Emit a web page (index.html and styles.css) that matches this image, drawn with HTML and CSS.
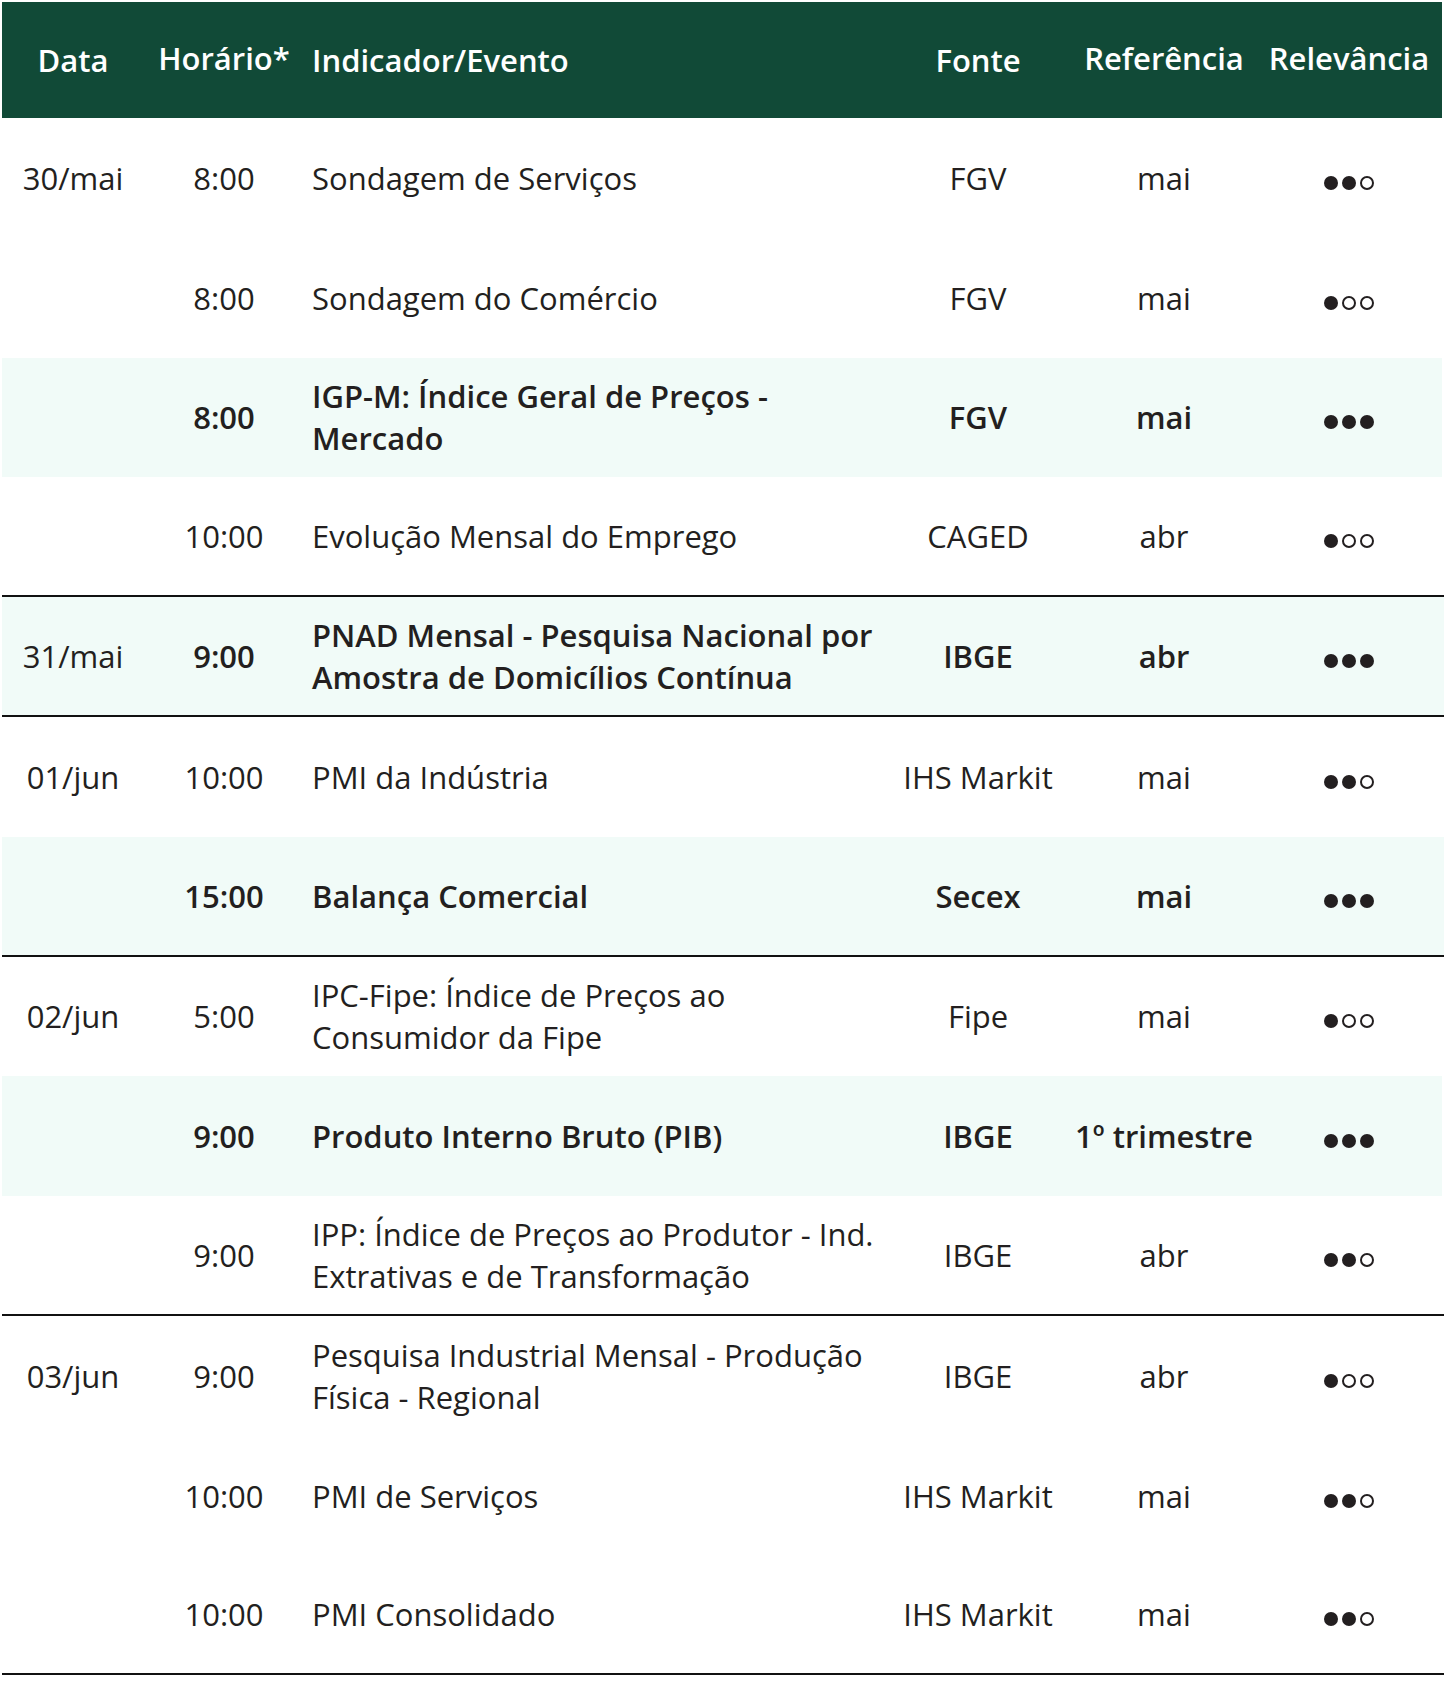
FILE: index.html
```html
<!DOCTYPE html>
<html lang="pt-BR">
<head>
<meta charset="utf-8">
<title>Agenda</title>
<link rel="stylesheet" href="styles.css">
</head>
<body>
<div class="table">
  <div class="row head">
    <div class="c date">Data</div>
    <div class="c time raised">Horário*</div>
    <div class="c ev">Indicador/Evento</div>
    <div class="c src">Fonte</div>
    <div class="c ref raised">Referência</div>
    <div class="c rel raised">Relevância</div>
  </div>

  <div class="row">
    <div class="c date">30/mai</div>
    <div class="c time">8:00</div>
    <div class="c ev">Sondagem de Serviços</div>
    <div class="c src">FGV</div>
    <div class="c ref">mai</div>
    <div class="c rel"><span class="dots"><i class="on"></i><i class="on"></i><i class="off"></i></span></div>
  </div>
  <div class="row">
    <div class="c date"></div>
    <div class="c time">8:00</div>
    <div class="c ev">Sondagem do Comércio</div>
    <div class="c src">FGV</div>
    <div class="c ref">mai</div>
    <div class="c rel"><span class="dots"><i class="on"></i><i class="off"></i><i class="off"></i></span></div>
  </div>
  <div class="row hl">
    <div class="c date"></div>
    <div class="c time b">8:00</div>
    <div class="c ev b">IGP-M: Índice Geral de Preços -<br>Mercado</div>
    <div class="c src b">FGV</div>
    <div class="c ref b">mai</div>
    <div class="c rel"><span class="dots"><i class="on"></i><i class="on"></i><i class="on"></i></span></div>
  </div>
  <div class="row end">
    <div class="c date"></div>
    <div class="c time">10:00</div>
    <div class="c ev">Evolução Mensal do Emprego</div>
    <div class="c src">CAGED</div>
    <div class="c ref">abr</div>
    <div class="c rel"><span class="dots"><i class="on"></i><i class="off"></i><i class="off"></i></span></div>
  </div>

  <div class="row hl end">
    <div class="c date">31/mai</div>
    <div class="c time b">9:00</div>
    <div class="c ev b">PNAD Mensal - Pesquisa Nacional por<br>Amostra de Domicílios Contínua</div>
    <div class="c src b">IBGE</div>
    <div class="c ref b">abr</div>
    <div class="c rel"><span class="dots"><i class="on"></i><i class="on"></i><i class="on"></i></span></div>
  </div>

  <div class="row">
    <div class="c date">01/jun</div>
    <div class="c time">10:00</div>
    <div class="c ev">PMI da Indústria</div>
    <div class="c src">IHS Markit</div>
    <div class="c ref">mai</div>
    <div class="c rel"><span class="dots"><i class="on"></i><i class="on"></i><i class="off"></i></span></div>
  </div>
  <div class="row hl end">
    <div class="c date"></div>
    <div class="c time b">15:00</div>
    <div class="c ev b">Balança Comercial</div>
    <div class="c src b">Secex</div>
    <div class="c ref b">mai</div>
    <div class="c rel"><span class="dots"><i class="on"></i><i class="on"></i><i class="on"></i></span></div>
  </div>

  <div class="row">
    <div class="c date">02/jun</div>
    <div class="c time">5:00</div>
    <div class="c ev">IPC-Fipe: Índice de Preços ao<br>Consumidor da Fipe</div>
    <div class="c src">Fipe</div>
    <div class="c ref">mai</div>
    <div class="c rel"><span class="dots"><i class="on"></i><i class="off"></i><i class="off"></i></span></div>
  </div>
  <div class="row hl">
    <div class="c date"></div>
    <div class="c time b">9:00</div>
    <div class="c ev b">Produto Interno Bruto (PIB)</div>
    <div class="c src b">IBGE</div>
    <div class="c ref b">1º trimestre</div>
    <div class="c rel"><span class="dots"><i class="on"></i><i class="on"></i><i class="on"></i></span></div>
  </div>
  <div class="row end">
    <div class="c date"></div>
    <div class="c time">9:00</div>
    <div class="c ev">IPP: Índice de Preços ao Produtor - Ind.<br>Extrativas e de Transformação</div>
    <div class="c src">IBGE</div>
    <div class="c ref">abr</div>
    <div class="c rel"><span class="dots"><i class="on"></i><i class="on"></i><i class="off"></i></span></div>
  </div>

  <div class="row">
    <div class="c date">03/jun</div>
    <div class="c time">9:00</div>
    <div class="c ev">Pesquisa Industrial Mensal - Produção<br>Física - Regional</div>
    <div class="c src">IBGE</div>
    <div class="c ref">abr</div>
    <div class="c rel"><span class="dots"><i class="on"></i><i class="off"></i><i class="off"></i></span></div>
  </div>
  <div class="row">
    <div class="c date"></div>
    <div class="c time">10:00</div>
    <div class="c ev">PMI de Serviços</div>
    <div class="c src">IHS Markit</div>
    <div class="c ref">mai</div>
    <div class="c rel"><span class="dots"><i class="on"></i><i class="on"></i><i class="off"></i></span></div>
  </div>
  <div class="row end">
    <div class="c date"></div>
    <div class="c time">10:00</div>
    <div class="c ev">PMI Consolidado</div>
    <div class="c src">IHS Markit</div>
    <div class="c ref">mai</div>
    <div class="c rel"><span class="dots"><i class="on"></i><i class="on"></i><i class="off"></i></span></div>
  </div>
</div>
</body>
</html>
```
FILE: styles.css
```css
html, body {
  margin: 0;
  padding: 0;
  background: #ffffff;
}
body {
  padding: 2px 0 0 2px;
  font-family: "Open Sans", "Noto Sans", sans-serif;
  font-size: 31px;
  color: #231f20;
}
.table {
  width: 1440px;
}
.row {
  display: grid;
  grid-template-columns: 142px 160px 586px 176px 196px 174px;
  height: 119.8px;
  box-sizing: border-box;
  align-items: center;
}
.row.head {
  height: 116px;
  background: #114a37;
  color: #ffffff;
  font-weight: 600;
}
.row.hl {
  background: #f1fbf8;
}
.row.end {
  border-bottom: 2px solid #111111;
  margin-right: -2px;
  padding-right: 2px;
}
.c {
  text-align: center;
  line-height: 42px;
  white-space: nowrap;
}
.c.ev {
  text-align: left;
  padding-left: 8px;
}
.head .c.raised {
  padding-bottom: 5px;
}
.b {
  font-weight: 600;
}
.dots {
  display: inline-flex;
  gap: 4px;
  align-items: center;
  margin-top: 6px;
}
.dots i {
  display: block;
  width: 14px;
  height: 14px;
  border-radius: 50%;
  box-sizing: border-box;
}
.dots i.on {
  background: #231f20;
}
.dots i.off {
  border: 2px solid #231f20;
}
```
